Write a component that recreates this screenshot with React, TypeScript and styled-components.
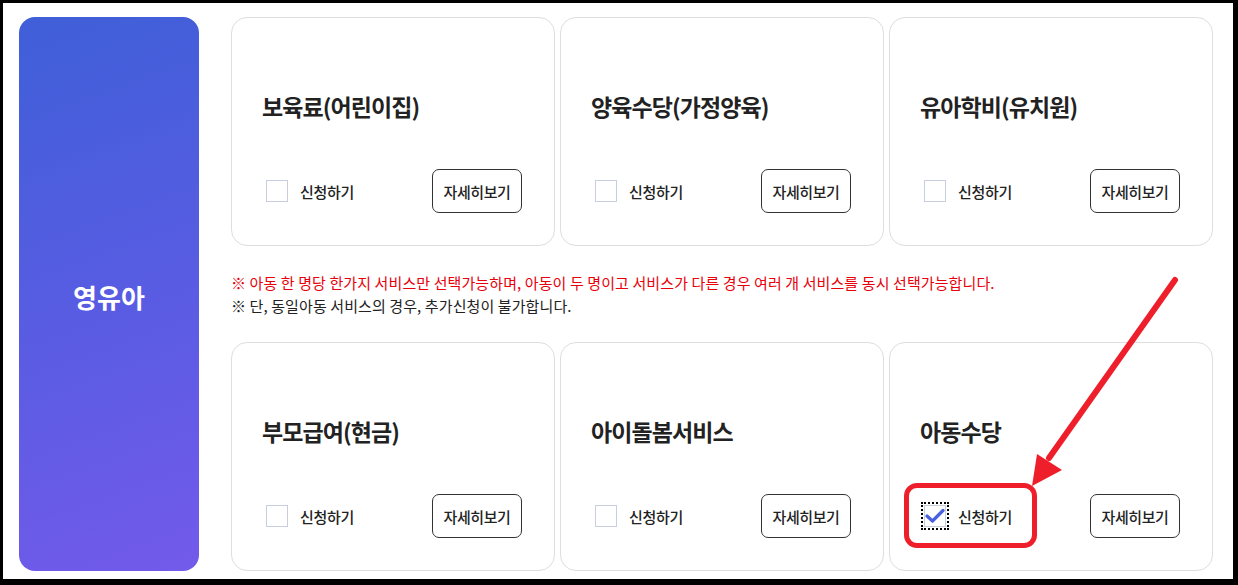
import React from "react";
import styled, { createGlobalStyle } from "styled-components";

const Global = createGlobalStyle`
  html, body { margin: 0; padding: 0; background: #fff; }
  body { font-family: "Noto Sans CJK KR", "Noto Sans", sans-serif; }
  * { box-sizing: border-box; }
`;

const Frame = styled.div`
  position: relative;
  width: 1238px;
  height: 585px;
  border-style: solid;
  border-color: #000;
  border-width: 3px 5px 6px 3px;
  background: #fff;
  overflow: hidden;
`;

const Page = styled.div`
  display: flex;
  gap: 32px;
  padding: 14px 20px 8px 16px;
  height: 100%;
`;

const Side = styled.div`
  width: 180px;
  flex: none;
  border-radius: 16px;
  background: linear-gradient(160deg, #3f5fd8 0%, #5a5ce3 55%, #735aeb 100%);
  display: flex;
  align-items: center;
  justify-content: center;
  color: #fff;
  font-size: 26px;
  font-weight: 700;
  letter-spacing: 0;
  padding-top: 4px;
`;

const Content = styled.div`
  flex: 1;
  display: flex;
  flex-direction: column;
`;

const Row = styled.div`
  display: grid;
  grid-template-columns: repeat(3, 1fr);
  gap: 5px;
  height: 229px;
`;

const Card = styled.div`
  border: 1px solid #dedede;
  border-radius: 16px;
  padding: 72px 32px 0 30px;
  display: flex;
  flex-direction: column;
`;

const Title = styled.div`
  font-size: 23px;
  font-weight: 700;
  color: #222;
  line-height: 32px;
  letter-spacing: -0.9px;
  height: 32px;
`;

const Footer = styled.div`
  margin-top: 47px;
  display: flex;
  align-items: center;
  justify-content: space-between;
  padding-left: 4px;
`;

const Apply = styled.label`
  display: flex;
  align-items: center;
  gap: 12px;
  font-size: 15px;
  font-weight: 500;
  color: #222;
  letter-spacing: -0.3px;
`;

const Box = styled.span<{ $checked?: boolean }>`
  position: relative;
  width: 22px;
  height: 22px;
  border: 1px solid #c6cedf;
  background: #fff;
  display: flex;
  align-items: center;
  justify-content: center;
  outline: ${(p) => (p.$checked ? "2px dotted #000" : "none")};
  outline-offset: 1px;
`;

const DetailButton = styled.button`
  width: 90px;
  height: 44px;
  border: 1px solid #333;
  border-radius: 7px;
  background: #fff;
  font-family: inherit;
  font-size: 15px;
  font-weight: 500;
  color: #222;
  letter-spacing: -0.4px;
  padding: 0;
`;

const Notes = styled.div`
  height: 96px;
  padding-top: 25px;
  font-size: 15px;
  line-height: 23px;
  letter-spacing: 0.1px;
  color: #222;
`;

const Red = styled.div`
  color: #e8000b;
`;

const Highlight = styled.div`
  position: absolute;
  left: 901px;
  top: 480px;
  width: 133px;
  height: 65px;
  border: 5px solid #ee1f2a;
  border-radius: 13px;
  pointer-events: none;
`;

const Arrow = styled.svg`
  position: absolute;
  left: 0;
  top: 0;
  pointer-events: none;
`;

type Item = { title: string; checked?: boolean };

const row1: Item[] = [
  { title: "보육료(어린이집)" },
  { title: "양육수당(가정양육)" },
  { title: "유아학비(유치원)" },
];
const row2: Item[] = [
  { title: "부모급여(현금)" },
  { title: "아이돌봄서비스" },
  { title: "아동수당", checked: true },
];

const ServiceCard = ({ item }: { item: Item }) => (
  <Card>
    <Title>{item.title}</Title>
    <Footer>
      <Apply>
        <Box $checked={item.checked}>
          {item.checked && (
            <svg width="20" height="16" viewBox="0 0 20 16">
              <path
                d="M2 8 L7.5 13 L18 2.5"
                fill="none"
                stroke="#4a5fe2"
                strokeWidth="3.2"
                strokeLinecap="round"
                strokeLinejoin="round"
              />
            </svg>
          )}
        </Box>
        신청하기
      </Apply>
      <DetailButton>자세히보기</DetailButton>
    </Footer>
  </Card>
);

export default function App() {
  return (
    <Frame>
      <Global />
      <Page>
        <Side>영유아</Side>
        <Content>
          <Row>
            {row1.map((it) => (
              <ServiceCard key={it.title} item={it} />
            ))}
          </Row>
          <Notes>
            <Red>
              ※ 아동 한 명당 한가지 서비스만 선택가능하며, 아동이 두 명이고 서비스가 다른 경우 여러 개 서비스를 동시 선택가능합니다.
            </Red>
            <div>※ 단, 동일아동 서비스의 경우, 추가신청이 불가합니다.</div>
          </Notes>
          <Row>
            {row2.map((it) => (
              <ServiceCard key={it.title} item={it} />
            ))}
          </Row>
        </Content>
      </Page>
      <Highlight />
      <Arrow width="1238" height="585" viewBox="0 0 1238 585">
        <line x1="1172" y1="277" x2="1046" y2="455" stroke="#ee1f2a" strokeWidth="6" strokeLinecap="round" />
        <polygon points="1029,483 1034,451 1059,467" fill="#ee1f2a" />
      </Arrow>
    </Frame>
  );
}
